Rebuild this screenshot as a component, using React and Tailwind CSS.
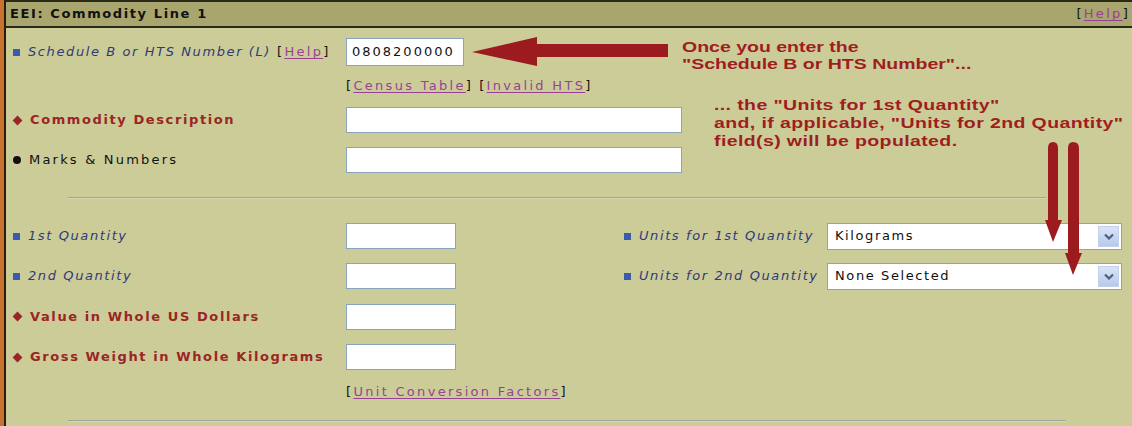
import React from 'react';

const font = { fontFamily: '"DejaVu Sans", Verdana, sans-serif' };

function Bullet({ kind }) {
  if (kind === 'square') return <span className="inline-block w-[7px] h-[7px] bg-[#3a5bb0] mr-[8px] shrink-0" />;
  if (kind === 'diamond') return <span className="inline-block w-[7px] h-[7px] bg-[#9b2525] rotate-45 ml-[1px] mr-[9px] shrink-0" />;
  return <span className="inline-block w-[8px] h-[8px] rounded-full bg-[#111] mr-[8px] shrink-0" />;
}

function Label({ kind, children }) {
  const cls =
    kind === 'square'
      ? 'italic text-[#2f3a78] tracking-[1.6px]'
      : kind === 'diamond'
      ? 'font-bold text-[#9b2525] tracking-[1.6px]'
      : 'text-[#111] tracking-[2.2px]';
  return (
    <div className="flex items-center whitespace-nowrap">
      <Bullet kind={kind} />
      <span className={cls}>{children}</span>
    </div>
  );
}

function Link({ children }) {
  return (
    <span className="text-[#111] tracking-[2.3px]">
      [<span className="text-[#9a3f96] underline underline-offset-2">{children}</span>]
    </span>
  );
}

function Input({ w, value }) {
  return (
    <div className={`${w} h-[26px] bg-white border border-[#8aa4bf] flex items-center px-[5px] text-[#111] tracking-[2px]`}>
      {value}
    </div>
  );
}

function Select({ value }) {
  return (
    <div className="w-[295px] h-[27px] bg-white border border-[#8aa4bf] flex items-center pl-[7px] pr-[2px] text-[#111] tracking-[1.6px]">
      <span className="flex-1">{value}</span>
      <span className="w-[21px] h-[21px] bg-gradient-to-b from-[#dbe5f6] to-[#b7c9ea] border border-[#c3d2ec] flex items-center justify-center">
        <svg width="10" height="7" viewBox="0 0 10 7">
          <path d="M1 1.5 L5 5.5 L9 1.5" fill="none" stroke="#4a5f86" strokeWidth="2.2" />
        </svg>
      </span>
    </div>
  );
}

function Divider({ w }) {
  return <div className={`${w} ml-[55px] h-[2px] bg-[#a3a39a] border-b border-[#d6d6b0]`} />;
}

export default function App() {
  return (
    <div className="w-[1132px] h-[426px] overflow-hidden bg-[#cccc99] text-[13px] relative" style={font}>
      <div className="h-full border-l-[4px] border-[#c8722f]">
        <div className="h-full border-l-2 border-[#2b1d0e] flex flex-col">
          <div className="h-[28px] shrink-0 bg-[#a8a56e] border-t-2 border-b-2 border-[#2a2a18] flex items-center justify-between pl-[4px] pr-[2px]">
            <span className="font-bold text-[#111] tracking-[1.6px]">EEI: Commodity Line 1</span>
            <Link>Help</Link>
          </div>

          <div className="pl-[7px] flex flex-col">
            <div className="h-[44px] flex items-center pt-[4px]">
              <div className="w-[333px] flex items-center whitespace-nowrap">
                <Label kind="square">Schedule B or HTS Number (L)</Label>
                <span className="ml-[6px]"><Link>Help</Link></span>
              </div>
              <Input w="w-[118px] h-[28px]" value="0808200000" />
            </div>
            <div className="h-[28px] flex items-center pl-[333px] gap-[6px]">
              <Link>Census Table</Link>
              <Link>Invalid HTS</Link>
            </div>
            <div className="h-[40px] flex items-center">
              <div className="w-[333px]"><Label kind="diamond">Commodity Description</Label></div>
              <Input w="w-[336px]" />
            </div>
            <div className="h-[40px] flex items-center">
              <div className="w-[333px]"><Label kind="circle">Marks &amp; Numbers</Label></div>
              <Input w="w-[336px]" />
            </div>
            <div className="h-[36px] flex items-center">
              <Divider w="w-[978px]" />
            </div>
            <div className="h-[40px] flex items-center">
              <div className="w-[333px]"><Label kind="square">1st Quantity</Label></div>
              <div className="w-[278px]"><Input w="w-[110px]" /></div>
              <div className="w-[203px]"><Label kind="square">Units for 1st Quantity</Label></div>
              <Select value="Kilograms" />
            </div>
            <div className="h-[40px] flex items-center">
              <div className="w-[333px]"><Label kind="square">2nd Quantity</Label></div>
              <div className="w-[278px]"><Input w="w-[110px]" /></div>
              <div className="w-[203px]"><Label kind="square">Units for 2nd Quantity</Label></div>
              <Select value="None Selected" />
            </div>
            <div className="h-[41px] flex items-center">
              <div className="w-[333px]"><Label kind="diamond">Value in Whole US Dollars</Label></div>
              <Input w="w-[110px]" />
            </div>
            <div className="h-[40px] flex items-center">
              <div className="w-[333px]"><Label kind="diamond">Gross Weight in Whole Kilograms</Label></div>
              <Input w="w-[110px]" />
            </div>
            <div className="h-[30px] flex items-center pl-[333px]">
              <Link>Unit Conversion Factors</Link>
            </div>
            <div className="h-[28px] flex items-center">
              <Divider w="w-[998px]" />
            </div>
          </div>
        </div>
      </div>

      {/* annotation overlay */}
      <svg className="absolute left-0 top-0 pointer-events-none" width="1132" height="426">
        <polygon points="472,52 537,37 537,44 668,44 668,57 537,57 537,66" fill="#9b1b1f" />
        <path d="M1048 243 L1048 148 Q1048 142 1053 142 Q1058 142 1058 148 L1058 220 L1062 220 L1053 242 L1045 220 L1048 220 Z" fill="#9b1b1f" />
        <path d="M1068 253 L1068 148 Q1068 142 1073 142 Q1079 142 1079 148 L1079 253 L1082 253 L1073 275 L1065 253 Z" fill="#9b1b1f" />
      </svg>
      <div
        className="absolute left-[682px] top-[38px] font-bold text-[#a01d1f] text-[15px] leading-[17px] origin-left scale-x-[1.3]"
        style={{ fontFamily: '"Liberation Sans", Arial, sans-serif' }}
      >
        <div>Once you enter the</div>
        <div>"Schedule B or HTS Number"...</div>
      </div>
      <div
        className="absolute left-[714px] top-[96px] font-bold text-[#a01d1f] text-[15px] leading-[18px] origin-left scale-x-[1.3] tracking-[0.3px]"
        style={{ fontFamily: '"Liberation Sans", Arial, sans-serif' }}
      >
        <div>... the "Units for 1st Quantity"</div>
        <div>and, if applicable, "Units for 2nd Quantity"</div>
        <div>field(s) will be populated.</div>
      </div>
    </div>
  );
}
